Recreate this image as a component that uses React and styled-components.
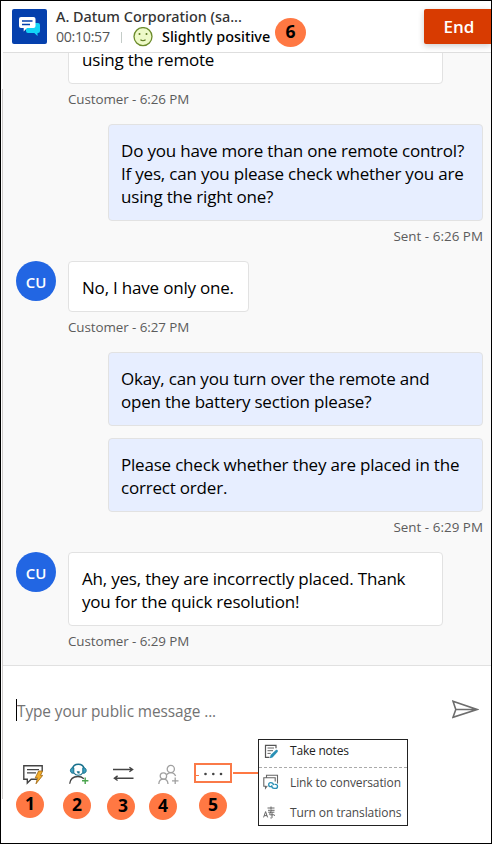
import React from 'react';
import styled, { createGlobalStyle } from 'styled-components';

const GlobalStyle = createGlobalStyle`
  *, *::before, *::after { box-sizing: border-box; }
  body { margin: 0; font-family: "Open Sans", "Noto Sans", sans-serif; background: #fff; }
  svg { display: block; }
`;

const Frame = styled.div`
  display: flex;
  flex-direction: column;
  width: 492px;
  height: 844px;
  border: 1px solid #000;
  overflow: hidden;
  background: linear-gradient(#cfcccb, #cfcccb) 1px 88px / 1px 710px no-repeat, #fff;
`;

const Header = styled.header`
  display: flex;
  flex: none;
  height: 52px;
  margin-left: 2px;
  padding: 8px 0 0 9px;
  border-bottom: 1px solid #dedede;
`;

const ChannelTile = styled.div`
  width: 35px;
  height: 35px;
  border-radius: 2px;
  background: #0540ad;
`;

const CallerInfo = styled.div`
  display: flex;
  flex-direction: column;
  margin-left: 9px;
  width: 216px;
`;

const CallerName = styled.div`
  height: 17px;
  font: 500 14.4px/16px "Noto Sans", sans-serif;
  letter-spacing: 0;
  color: #333;
  white-space: nowrap;
`;

const StatusLine = styled.div`
  display: flex;
  align-items: center;
  height: 22px;
  white-space: nowrap;
`;

const Timer = styled.span`
  width: 65px;
  margin-top: -2px;
  font-size: 14.2px;
  letter-spacing: -0.3px;
  color: #555;
`;

const Divider = styled.span`
  width: 1px;
  height: 11px;
  margin-right: 11px;
  background: #c4ccc8;
`;

const Mood = styled.span`
  margin-left: 9px;
  font: 500 14.4px/20px "Noto Sans", sans-serif;
  letter-spacing: 0;
  color: #000;
`;

const Badge = styled.span`
  display: flex;
  align-items: center;
  justify-content: center;
  flex: none;
  width: ${(p) => (p.$large ? 31 : 28)}px;
  height: ${(p) => (p.$large ? 29 : 27)}px;
  padding-left: ${(p) => p.$nudge || 0}px;
  border-radius: 50%;
  background: #ff7843;
  color: #000;
  font-size: 17.5px;
  font-weight: 700;
  line-height: 1;
  padding-bottom: 2px;
`;

const HeaderBadge = styled.div`
  margin: 9px 0 0 3px;
`;

const EndButton = styled.button`
  width: 67px;
  height: 35px;
  margin: 0 0 0 auto;
  padding: 0 0 2px 3px;
  border: 0;
  border-radius: 2px 0 0 2px;
  background: #d83b01;
  box-shadow: 0 2px 6px rgba(0, 0, 0, 0.2);
  color: #fff;
  font: 600 17px/35px "Open Sans", sans-serif;
`;

const Messages = styled.main`
  display: flex;
  flex-direction: column;
  justify-content: flex-end;
  flex: none;
  height: 613px;
  margin-left: 2px;
  padding: 0 8px 9px 13px;
  overflow: hidden;
  border-bottom: 1px solid #e1e1e1;
  background: #f9f9f9;
`;

const Incoming = styled.div`
  display: grid;
  grid-template-columns: 52px 1fr;
  justify-items: start;
  flex: none;
`;

const Outgoing = styled.div`
  display: grid;
  gap: 12px;
  justify-items: end;
  flex: none;
`;

const Avatar = styled.div`
  width: 40px;
  height: 40px;
  border-radius: 50%;
  background: #2266e3;
  color: #fff;
  font-size: 15px;
  font-weight: 600;
  line-height: 42px;
  text-align: center;
`;

const Bubble = styled.div`
  width: ${(p) => (p.$short ? '181px' : '375px')};
  padding: 14px 0 12px ${(p) => (p.$sent ? 12 : 13)}px;
  border: 1px solid #e2e2e2;
  border-radius: 4px;
  background: ${(p) => (p.$sent ? '#e7eeff' : '#fff')};
  color: #000;
  font-size: 17px;
  line-height: 23px;
  letter-spacing: -0.2px;
  white-space: nowrap;
`;

const Meta = styled.div`
  flex: none;
  height: ${(p) => (p.$last ? 30 : 40)}px;
  padding-left: ${(p) => (p.$sent ? 0 : 52)}px;
  color: #5c5c5c;
  font-size: 13.4px;
  line-height: 30px;
  letter-spacing: ${(p) => (p.$sent ? 0.03 : -0.08)}px;
  text-align: ${(p) => (p.$sent ? 'right' : 'left')};
`;

const Composer = styled.footer`
  position: relative;
  flex: 1;
  padding-left: 15px;
`;

const InputRow = styled.div`
  display: flex;
  align-items: flex-start;
  justify-content: space-between;
  height: 97px;
  padding: 33px 12px 0 0;
`;

const Placeholder = styled.div`
  height: 22px;
  border-left: 1px solid #000;
  color: #737373;
  font-size: 15.4px;
  line-height: 25px;
  letter-spacing: -0.09px;
`;

const Toolbar = styled.div`
  display: flex;
`;

const Tool = styled.div`
  display: flex;
  flex-direction: column;
  align-items: center;
  width: ${(p) => p.$width || 28}px;
  margin-left: ${(p) => p.$gap || 0}px;
`;

const ToolIcon = styled.div`
  height: 22px;
  margin: 0 0 ${(p) => p.$below || 6}px ${(p) => p.$shift || 0}px;
`;

const MoreBox = styled.div`
  width: 38px;
  height: 20px;
  margin-bottom: 9px;
  border: 2px solid #fa7a48;
`;

const Connector = styled.div`
  position: absolute;
  left: 232px;
  top: 106px;
  width: 26px;
  height: 2px;
  background: #ff7843;
`;

const Menu = styled.div`
  position: absolute;
  left: 257px;
  top: 73px;
  width: 150px;
  height: 87px;
  border: 1px solid #222;
  background: #fff;
`;

const MenuItem = styled.div`
  display: flex;
  align-items: center;
  height: ${(p) => p.$height}px;
  padding: ${(p) => p.$pad || '0'};
  border-bottom: ${(p) => (p.$ruled ? '1px dashed #aaa' : '0')};
  color: ${(p) => (p.$ruled ? '#222' : '#484848')};
  font-size: 12px;
  letter-spacing: ${(p) => (p.$ruled ? -0.2 : -0.1)}px;
  white-space: nowrap;
`;

const MenuIcon = styled.span`
  width: 27px;
  margin-left: 4px;
`;

const ChatLogo = () => (
  <svg width="35" height="35" viewBox="0 0 35 35">
    <path d="M14 14h12q2 0 2 2v6q0 2-2 2h-.5v3l-3.2-3H16q-2 0-2-2z" fill="#12d5f7" />
    <path d="M9 8h12.5q2 0 2 2v7q0 2-2 2H15l-3.3 3.4V19H9q-2 0-2-2v-7q0-2 2-2z" fill="#fff" />
    <path d="M10 12h10.5M10 15.5h8" stroke="#0540ad" strokeWidth="1.4" />
  </svg>
);

const Smiley = () => (
  <svg width="20" height="20" viewBox="0 0 20 20" fill="none">
    <circle cx="10" cy="9.6" r="9" fill="#eefac8" stroke="#6b8b2a" strokeWidth="1.3" />
    <circle cx="6.5" cy="7" r="1" fill="#5d7a22" />
    <circle cx="13.5" cy="7" r="1" fill="#5d7a22" />
    <path d="M7.4 12.8q2.6 1.8 5.2 0" stroke="#5d7a22" strokeWidth="1.1" />
  </svg>
);

const SendIcon = () => (
  <svg width="27" height="20" viewBox="0 0 27 20" fill="none" stroke="#6d6d6d" strokeWidth="1.6">
    <path d="M1 2.2 25 10.5 1 18.3 3.8 10.5zM3.8 10.5H25" />
  </svg>
);

const QuickReplyIcon = () => (
  <svg width="20" height="22" viewBox="0 0 20 22" fill="none">
    <path d="M14 16.2H8.2L4.3 20v-3.8H.8V2.8h18.4V8" stroke="#444" strokeWidth="1.4" />
    <path d="M4 6.7h12M4 9.9h9" stroke="#444" strokeWidth="1.2" />
    <path d="M15.6 8h4l-2.1 4.4h2.2L13 20.8l1.5-5.9h-2.3z" fill="#f3ae2b" stroke="#9a6412" strokeWidth=".8" />
  </svg>
);

const ConsultIcon = () => (
  <svg width="20" height="22" viewBox="0 0 20 22" fill="none">
    <path d="M.7 20.8c.5-4.800 3.700-7.300 8.200-7.300 2.500 0 4.500.8 6 2.200" stroke="#444" strokeWidth="1.3" />
    <path d="M3.600 5.500C4.100 2.600 6 1.200 9.300 1.200s5.200 1.400 5.700 4.300" stroke="#18708c" strokeWidth="1.5" />
    <path d="M4.800 4.800h-1c-3.200 0-3.200 5.400 0 5.400h1zM13.800 4.800h1c3.200 0 3.200 5.400 0 5.400h-1z" fill="#3b9fbe" stroke="#18708c" strokeWidth="1" />
    <path d="M5 10c1.800 3 6.800 3 8.600 0" stroke="#18708c" strokeWidth="1.1" />
    <path d="M7.600 8.300h3v2.200H8.800z" fill="#18708c" />
    <path d="M13 17.800h6.400M16.200 14.600V21" stroke="#4aa44d" strokeWidth="1.4" />
  </svg>
);

const TransferIcon = () => (
  <svg width="21" height="22" viewBox="0 0 21 22" fill="none" stroke="#444" strokeWidth="1.4">
    <path d="M0 6.500h19.500M16.400 4.200l3.200 2.300-3.200 2.300M20.500 15.200H1.500M4.600 12.900l-3.200 2.300 3.200 2.300" />
  </svg>
);

const PeopleAddIcon = () => (
  <svg width="21" height="22" viewBox="0 0 21 22" fill="none" stroke="#a0a0a0" strokeWidth="1.3">
    <circle cx="12.8" cy="6" r="3.600" />
    <circle cx="5.400" cy="13" r="3.200" />
    <path d="M.8 21c.2-3 2-4.800 4.600-4.800S9.800 18 10 21M8.800 11.500c1-1.200 2.400-1.900 4-1.900 2.400 0 4 1.400 4.800 3.500M14 17.800h6.500M17.200 14.500V21" />
  </svg>
);

const MoreIcon = () => (
  <svg width="34" height="16" viewBox="0 0 34 16">
    <path d="M0 10.500h3" stroke="#fa7a48" />
    <circle cx="9.500" cy="9" r="1.300" fill="#444" />
    <circle cx="17.300" cy="9" r="1.300" fill="#444" />
    <circle cx="25" cy="9" r="1.300" fill="#444" />
  </svg>
);

const NotesIcon = () => (
  <svg width="16" height="16" viewBox="0 0 16 16" fill="none">
    <path d="M6.500 14.300H2.500V2.300H13v3" stroke="#555" strokeWidth="1.2" />
    <path d="M4.500 5H11M4.500 7.700H10M4.500 10.400h3.200" stroke="#666" />
    <path d="m6.800 15.200.8-3.200 5.300-5c1.500-.7 2.600.6 1.600 2L9.500 14.400z" fill="#2a90b5" />
  </svg>
);

const LinkChatIcon = () => (
  <svg width="16" height="16" viewBox="0 0 16 16" fill="none">
    <path d="M3.500 4V1.200h11V9.500M4.500 12.200H4l-1.500 2v-2H.8V3.800h11.400v3.800" stroke="#666" strokeWidth="1.1" />
    <path d="M9.500 12.700H7.700a2 2 0 0 1 0-4q2.600 0 2.800 2.400M8.700 11.200q0 3.200 2.600 3.200h1.200a2 2 0 0 0 0-4h-1" stroke="#2a90b5" strokeWidth="1.3" />
  </svg>
);

const TranslateIcon = () => (
  <svg width="13" height="14" viewBox="0 0 13 14" fill="none" stroke="#666" strokeWidth="1">
    <path d="m.6 11.400 2-5.800 2 5.800M1.300 9.600H4M4.500 2h7M8 .5v3.200M5 4.300h6.600M5.200 6.200h6.200M8.500 4.300 6.400 8.600M9 6.200v5.300q0 1-1.600.4M6.800 8.800H11q.8 0 .5 1" />
  </svg>
);

export default function App() {
  return (
    <Frame>
      <GlobalStyle />
      <Header>
        <ChannelTile><ChatLogo /></ChannelTile>
        <CallerInfo>
          <CallerName>A. Datum Corporation (sa...</CallerName>
          <StatusLine>
            <Timer>00:10:57</Timer>
            <Divider />
            <Smiley />
            <Mood>Slightly positive</Mood>
          </StatusLine>
        </CallerInfo>
        <HeaderBadge><Badge $large>6</Badge></HeaderBadge>
        <EndButton>End</EndButton>
      </Header>

      <Messages>
        <Incoming>
          <span />
          <Bubble>using the remote</Bubble>
        </Incoming>
        <Meta>Customer - 6:26 PM</Meta>
        <Outgoing>
          <Bubble $sent>
            Do you have more than one remote control?<br />
            If yes, can you please check whether you are<br />
            using the right one?
          </Bubble>
        </Outgoing>
        <Meta $sent>Sent - 6:26 PM</Meta>
        <Incoming>
          <Avatar>CU</Avatar>
          <Bubble $short>No, I have only one.</Bubble>
        </Incoming>
        <Meta>Customer - 6:27 PM</Meta>
        <Outgoing>
          <Bubble $sent>
            Okay, can you turn over the remote and<br />
            open the battery section please?
          </Bubble>
          <Bubble $sent>
            Please check whether they are placed in the<br />
            correct order.
          </Bubble>
        </Outgoing>
        <Meta $sent>Sent - 6:29 PM</Meta>
        <Incoming>
          <Avatar>CU</Avatar>
          <Bubble>
            Ah, yes, they are incorrectly placed. Thank<br />
            you for the quick resolution!
          </Bubble>
        </Incoming>
        <Meta $last>Customer - 6:29 PM</Meta>
      </Messages>

      <Composer>
        <InputRow>
          <Placeholder>Type your public message ...</Placeholder>
          <SendIcon />
        </InputRow>
        <Toolbar>
          <Tool>
            <ToolIcon $shift={6}><QuickReplyIcon /></ToolIcon>
            <Badge>1</Badge>
          </Tool>
          <Tool $gap={19}>
            <ToolIcon $shift={3} $below={7}><ConsultIcon /></ToolIcon>
            <Badge>2</Badge>
          </Tool>
          <Tool $gap={16}>
            <ToolIcon $shift={4} $below={8}><TransferIcon /></ToolIcon>
            <Badge $nudge={4}>3</Badge>
          </Tool>
          <Tool $gap={14}>
            <ToolIcon $shift={10} $below={8}><PeopleAddIcon /></ToolIcon>
            <Badge>4</Badge>
          </Tool>
          <Tool $gap={17} $width={38}>
            <MoreBox><MoreIcon /></MoreBox>
            <Badge>5</Badge>
          </Tool>
        </Toolbar>
        <Connector />
        <Menu>
          <MenuItem $ruled $height={28} $pad="0 0 6px"><MenuIcon><NotesIcon /></MenuIcon>Take notes</MenuItem>
          <MenuItem $height={28}><MenuIcon><LinkChatIcon /></MenuIcon>Link to conversation</MenuItem>
          <MenuItem $height={28} $pad="5px 0 0"><MenuIcon><TranslateIcon /></MenuIcon>Turn on translations</MenuItem>
        </Menu>
      </Composer>
    </Frame>
  );
}
